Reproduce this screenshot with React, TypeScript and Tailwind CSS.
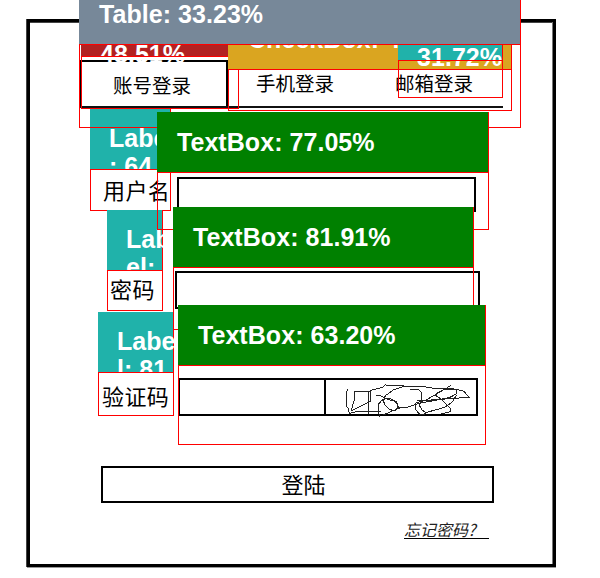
import type { ReactNode } from "react";

const kai = "font-['KaiTi','Kaiti_SC','Noto_Sans_CJK_SC',sans-serif]";

function Scribble() {
  return (
    <svg
      viewBox="18 60 450 102"
      className="block h-[34px] w-[150px] overflow-visible"
      fill="none"
      stroke="#222"
      strokeWidth="3"
      shapeRendering="crispEdges"
    >
      <path d="M82 88 L80 100 L80 140 L84 144 L88 160 L104 156 L184 155" />
      <path d="M103 94 H152 V124 L132 134 L94 152 L102 122 L102 94" />
      <path d="M146 163 V96 L156 90 L188 82 L196 74 L202 77 L252 78 L314 80 L345 86 L408 88 L432 94 L447 112 L360 118 L290 123" />
      <path d="M252 79 L220 90 L196 107 L190 122 L195 135 L208 148 L224 153 L234 143 L232 130 L217 118 L203 114 L185 121 L176 132 L176 160 L180 171" />
      <path d="M168 106 L184 108 L206 119 L228 124 L237 145 L214 154 L190 165" />
      <path d="M232 143 L264 141 L298 130 L345 121 L390 112 L410 101 L409 90 L398 85 L374 88 L350 99 L347 106 L366 119 L390 144 L392 155 L364 162" />
      <path d="M392 77 L368 91 L346 104 L320 119 L286 130 L286 148 L298 162 L310 164 L324 156 L374 142 L396 127 L409 106" />
      <path d="M270 88 L298 90 L305 98 L304 120 L298 136 L306 150 L322 160" />
    </svg>
  );
}

function Field({ label, row, labelBox, inputBox, children }: {
  label: string;
  row: string;
  labelBox: string;
  inputBox: string;
  children?: ReactNode;
}) {
  return (
    <div className={`flex ${row}`}>
      <span className={`flex shrink-0 items-center whitespace-nowrap text-[22px] leading-none tracking-[0.4px] ${labelBox}`}>{label}</span>
      <div className={`flex shrink-0 border-2 border-black ${inputBox}`}>{children}</div>
    </div>
  );
}

function LoginForm() {
  return (
    <div className={`ml-[27px] flex h-[548px] w-[529px] flex-col border-[3px] border-black shadow-[-1px_0_0_#444,0_1px_0_#999,inset_-1px_0_0_#777,inset_0_1px_0_#444] ${kai}`}>
      <div className="mt-[38px] ml-[50px] flex h-12 w-[423px] shrink-0 border-b-2 border-[#111] text-[19.5px] leading-none">
        <div className="flex w-[148px] items-center border-x-2 border-t-2 border-black pt-[2px] pl-[31px]">账号登录</div>
        <div className="w-[139px] pt-[13px] pl-[28px]">手机登录</div>
        <div className="w-[136px] whitespace-nowrap pt-[13px] pl-[28px]">邮箱登录</div>
      </div>
      <Field label="用户名" row="mt-[69px] ml-[73px] h-[35px] shrink-0" labelBox="w-[74px] pb-[12px]" inputBox="w-[299px]" />
      <Field label="密码" row="mt-[59px] ml-[80px] h-[38px] shrink-0" labelBox="w-[65px] pb-[4px]" inputBox="w-[305px]" />
      <Field label="验证码" row="mt-[69px] ml-[72px] h-[38px] shrink-0" labelBox="w-[76px] pb-[4px]" inputBox="w-[300px]">
        <div className="w-[146px] shrink-0 border-r-2 border-black" />
        <Scribble />
      </Field>
      <button className="mt-[50px] ml-[71px] flex h-[37px] w-[393px] shrink-0 items-center justify-center border-2 border-black pr-[2px] pb-[3px] pl-[14px] text-[22px] leading-none">
        登陆
      </button>
      <a className="mt-[19px] ml-[374px] h-[17px] w-[85px] shrink-0 border-b border-black whitespace-nowrap text-[16px] leading-[15px] text-[#222] italic">
        忘记密码?
      </a>
    </div>
  );
}

type Detection = { caption: string; text: string; box: string; lines: string[] };

// Listed from back to front.
const detections: Detection[] = [
  { caption: "left-[81px] top-[45px] h-[11px] w-[147px] bg-[#b22222]", text: "left-[19px] top-[-5px]", box: "left-[81px] top-[56px] h-[53px] w-[158px]", lines: ["48.51%"] },
  { caption: "left-[228px] top-[45px] h-[24px] w-[284px] border-r border-[#f00] bg-[#daa520] overflow-hidden", text: "left-[20px] top-[-20px]", box: "left-[228px] top-[69px] h-[42px] w-[284px]", lines: ["CheckBox: 4"] },
  { caption: "left-[398px] top-[45px] h-[15px] w-[105px] border-r border-[#f00] bg-[#20b2aa]", text: "left-[19px] top-[-2px]", box: "left-[398px] top-[60px] h-[38px] w-[105px]", lines: ["31.72%"] },
  { caption: "left-[90px] top-[109px] h-[60px] w-[81px] border-r border-[#f00] bg-[#20b2aa] overflow-y-clip", text: "left-[19px] top-[15px] leading-[28px]", box: "left-[90px] top-[169px] h-[42px] w-[81px]", lines: ["Label", ": 64"] },
  { caption: "left-[79px] top-0 h-[44px] w-[442px] border-r border-[#f00] bg-[#778899]", text: "left-[20px] top-[0px]", box: "left-[79px] top-[44px] h-[84px] w-[442px]", lines: ["Table: 33.23%"] },
  { caption: "left-[107px] top-[210px] h-[60px] w-[56px] border-r border-[#f00] bg-[#20b2aa] overflow-y-clip", text: "left-[19px] top-[15px] leading-[28px]", box: "left-[107px] top-[270px] h-[41px] w-[56px]", lines: ["Lab", "el:"] },
  { caption: "left-[157px] top-[112px] h-[60px] w-[332px] border-r border-[#f00] bg-[#008000]", text: "left-[20px] top-[16px]", box: "left-[157px] top-[172px] h-[58px] w-[332px]", lines: ["TextBox: 77.05%"] },
  { caption: "left-[173px] top-[207px] h-[60px] w-[301px] border-r border-[#f00] bg-[#008000]", text: "left-[20px] top-[16px]", box: "left-[173px] top-[267px] h-[63px] w-[301px]", lines: ["TextBox: 81.91%"] },
  { caption: "left-[98px] top-[312px] h-[60px] w-[76px] border-r border-[#f00] bg-[#20b2aa] overflow-y-clip", text: "left-[19px] top-[15px] leading-[28px]", box: "left-[98px] top-[372px] h-[44px] w-[76px]", lines: ["Labe", "l: 81"] },
  { caption: "left-[178px] top-[305px] h-[60px] w-[308px] border-r border-[#f00] bg-[#008000]", text: "left-[20px] top-[16px]", box: "left-[178px] top-[365px] h-[80px] w-[308px]", lines: ["TextBox: 63.20%"] },
];

function DetectionOverlay({ caption, text, box, lines }: Detection) {
  return (
    <>
      <div className={`absolute ${caption}`}>
        <div className={`absolute whitespace-nowrap ${text}`}>
          {lines.map((line) => (
            <div key={line}>{line}</div>
          ))}
        </div>
      </div>
      <div className={`absolute border border-[#f00] ${box}`} />
    </>
  );
}

export default function App() {
  return (
    <div className="relative h-[578px] w-[600px] overflow-hidden bg-white pt-[19px] text-black">
      <LoginForm />
      <div className="absolute inset-0 font-['Liberation_Sans',Arial,sans-serif] text-[25px] leading-[29px] font-bold tracking-[0.05px] text-white">
        {detections.map((d) => (
          <DetectionOverlay key={d.box} {...d} />
        ))}
      </div>
    </div>
  );
}
